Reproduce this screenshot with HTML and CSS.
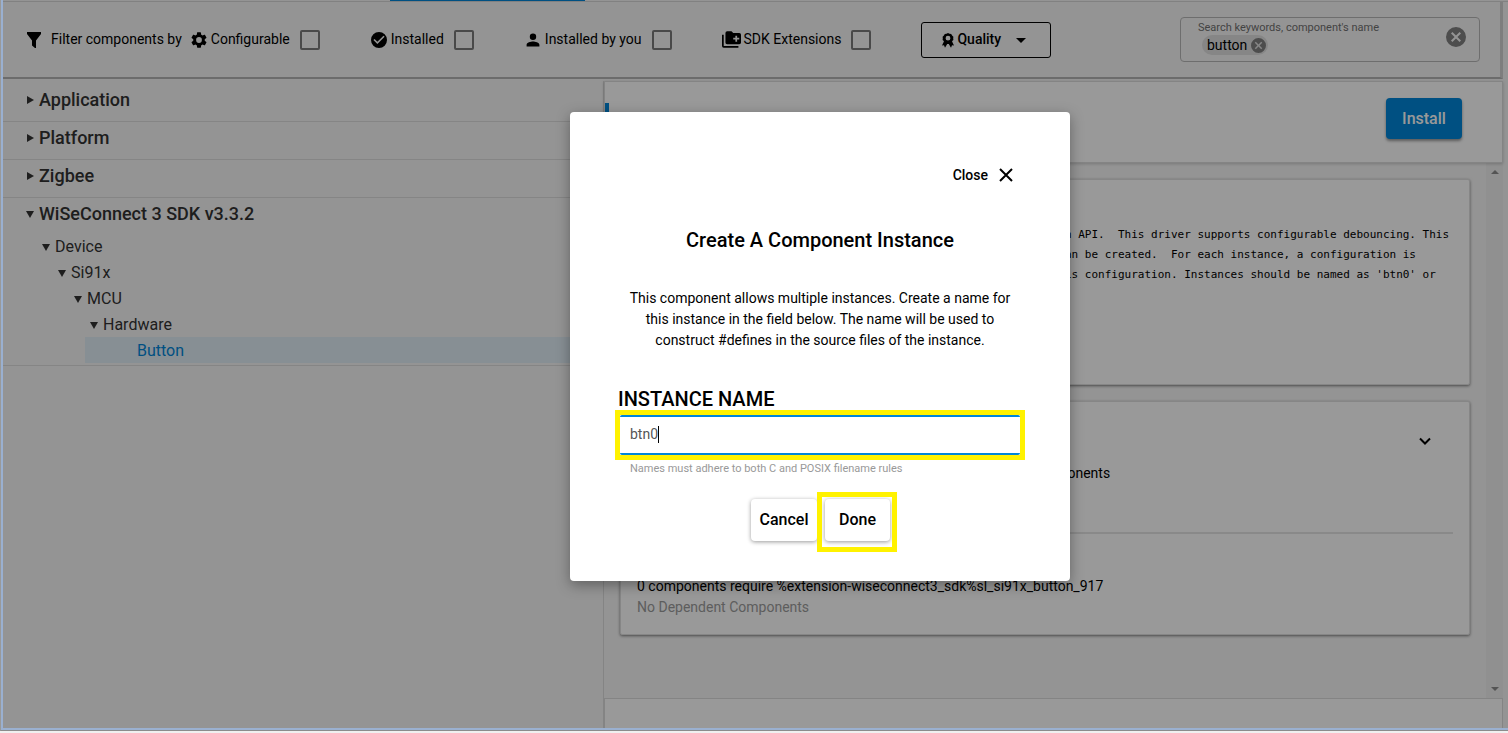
FILE: index.html
```html
<!DOCTYPE html>
<html lang="en">
<head>
<meta charset="utf-8">
<title>Software Components</title>
<link rel="stylesheet" href="styles.css">
</head>
<body>
<div class="window">
<div class="app">
  <div class="tab-strip"><span class="tab-active"></span></div>
  <header class="toolbar">
    <svg class="funnel" viewBox="0 0 14 16"><path d="M0 0h14v2L9 8.500V16L8 16 5 13.500V8.500L0 2z"/></svg>
    <span class="filter-title">Filter components by</span>
    <div class="filters">
      <label class="filter">
        <svg class="icon" viewBox="2 2 20 20"><path d="M19.140 12.940c.04-.3.06-.61.06-.94 0-.32-.02-.64-.07-.94l2.030-1.580a.49.49 0 0 0 .12-.61l-1.920-3.320a.488.488 0 0 0-.59-.22l-2.390.96c-.5-.38-1.030-.7-1.620-.94l-.36-2.540a.484.484 0 0 0-.48-.41h-3.840c-.24 0-.43.17-.47.41l-.36 2.540c-.59.24-1.130.57-1.620.94l-2.390-.96c-.22-.08-.47 0-.59.22L2.740 8.870c-.12.21-.08.47.12.61l2.030 1.580c-.05.3-.09.63-.09.94s.02.64.07.94l-2.030 1.580a.49.49 0 0 0-.12.61l1.920 3.320c.12.22.37.29.59.22l2.390-.96c.5.38 1.030.7 1.620.94l.36 2.540c.05.24.24.41.48.41h3.840c.24 0 .44-.17.47-.41l.36-2.540c.59-.24 1.130-.56 1.620-.94l2.390.96c.22.08.47 0 .59-.22l1.920-3.320c.12-.22.07-.47-.12-.61zM12 15.600A3.600 3.600 0 1 1 12 8.400a3.600 3.600 0 0 1 0 7.200z"/></svg>
        <span class="filter-name">Configurable</span><input type="checkbox" class="box">
      </label>
      <label class="filter">
        <svg class="icon" viewBox="2 2 20 20"><path d="M12 2a10 10 0 1 0 0 20 10 10 0 0 0 0-20zm-2 15-5-5 1.400-1.400L10 14.200l7.600-7.600L19 8z"/></svg>
        <span class="filter-name">Installed</span><input type="checkbox" class="box">
      </label>
      <label class="filter">
        <svg class="icon" viewBox="2 2 20 20"><path d="M12 12a4 4 0 1 0 0-8 4 4 0 0 0 0 8zm0 2c-2.700 0-8 1.300-8 4v2h16v-2c0-2.700-5.300-4-8-4z"/></svg>
        <span class="filter-name">Installed by you</span><input type="checkbox" class="box">
      </label>
      <label class="filter">
        <svg class="icon icon-wide" viewBox="1 2 22 20"><path d="M3 6H1v13a2 2 0 0 0 2 2h17v-2H3z"/><path d="M21 4h-7l-2-2H7a2 2 0 0 0-2 2v11c0 1.100.9 2 2 2h14a2 2 0 0 0 2-2V6a2 2 0 0 0-2-2zm0 7.500h-2.500V14h-2v-2.500H14v-2h2.500V7h2v2.500H21z"/></svg>
        <span class="filter-name">SDK Extensions</span><input type="checkbox" class="box">
      </label>
      <div class="quality">
        <select class="quality-select" aria-label="Quality"><option>Quality</option></select>
        <svg class="quality-medal" viewBox="0 0 12 15"><path fill-rule="evenodd" d="M6 0l1.500.8 1.700.1.900 1.600 1.300 1.200-.2 1.600.2 1.700L10.200 8l-.1.500L12 12.500l-2-.2L9 14.800 6.800 11H5.200L3 14.800l-1-2.500-2 .2 1.900-4L1.800 8 .6 7l.2-1.700-.2-1.600 1.300-1.200.9-1.600L4.500.8zM6 2.800a2.400 2.400 0 1 0 0 4.800 2.400 2.400 0 0 0 0-4.800z"/></svg>
        <svg class="quality-arrow" viewBox="0 0 10 5"><path d="M0 0h10L5 5z"/></svg>
      </div>
    </div>
    <div class="search">
      <div class="search-body">
        <label class="search-label" for="search">Search keywords, component's name</label>
        <div class="search-line">
          <span class="chip"><span class="chip-name">button</span>
            <button class="round-clear" aria-label="Remove button"><svg viewBox="2 2 20 20"><path d="M12 2a10 10 0 1 0 0 20 10 10 0 0 0 0-20zm5 13.600L15.600 17 12 13.400 8.400 17 7 15.600l3.600-3.600L7 8.400 8.400 7l3.600 3.600L15.600 7 17 8.400 13.400 12z"/></svg></button>
          </span>
          <input id="search" class="search-input" type="text">
        </div>
      </div>
      <button class="round-clear clear-all" aria-label="Clear search"><svg viewBox="2 2 20 20"><path d="M12 2a10 10 0 1 0 0 20 10 10 0 0 0 0-20zm5 13.600L15.600 17 12 13.400 8.400 17 7 15.600l3.600-3.600L7 8.400 8.400 7l3.600 3.600L15.600 7 17 8.400 13.400 12z"/></svg></button>
    </div>
  </header>

  <div class="columns">
    <nav class="tree">
      <div class="group"><button class="node top"><svg class="arrow" viewBox="0 0 8 8"><path d="M1 0l7 4-7 4z"/></svg>Application</button></div>
      <div class="group"><button class="node top"><svg class="arrow" viewBox="0 0 8 8"><path d="M1 0l7 4-7 4z"/></svg>Platform</button></div>
      <div class="group"><button class="node top"><svg class="arrow" viewBox="0 0 8 8"><path d="M1 0l7 4-7 4z"/></svg>Zigbee</button></div>
      <div class="group open">
        <button class="node top"><svg class="arrow" viewBox="0 0 8 8"><path d="M0 1h8L4 8z"/></svg>WiSeConnect 3 SDK v3.3.2</button>
        <div class="branch">
          <button class="node"><svg class="arrow" viewBox="0 0 8 8"><path d="M0 1h8L4 8z"/></svg>Device</button>
          <div class="branch">
            <button class="node"><svg class="arrow" viewBox="0 0 8 8"><path d="M0 1h8L4 8z"/></svg>Si91x</button>
            <div class="branch">
              <button class="node"><svg class="arrow" viewBox="0 0 8 8"><path d="M0 1h8L4 8z"/></svg>MCU</button>
              <div class="branch">
                <button class="node"><svg class="arrow" viewBox="0 0 8 8"><path d="M0 1h8L4 8z"/></svg>Hardware</button>
                <button class="node leaf">Button</button>
              </div>
            </div>
          </div>
        </div>
      </div>
    </nav>

    <main class="detail">
      <div class="detail-head">
        <span class="accent"></span>
        <button class="install">Install</button>
      </div>
      <div class="scroller">
        <div class="cards">
          <section class="card description">
            <pre class="mono">n API.  This driver supports configurable debouncing. This
an be created.  For each instance, a configuration is
is configuration. Instances should be named as 'btn0' or</pre>
          </section>
          <section class="card dependencies">
            <button class="expand" aria-label="Expand"><svg viewBox="0 0 24 24"><path d="M7 9.500l5 5 5-5" fill="none" stroke="#000" stroke-width="2"/></svg></button>
            <p class="requires">components</p>
            <hr class="rule">
            <p class="line">0 components require %extension-wiseconnect3_sdk%sl_si91x_button_917</p>
            <p class="line muted">No Dependent Components</p>
          </section>
        </div>
        <div class="scrollbar">
          <svg viewBox="0 0 8 4"><path d="M4 0l4 4H0z"/></svg>
          <svg viewBox="0 0 8 4"><path d="M0 0h8L4 4z"/></svg>
        </div>
      </div>
      <footer class="detail-foot"></footer>
    </main>
  </div>

  <div class="backdrop">
    <div class="dialog" role="dialog" aria-modal="true" aria-labelledby="dialog-title">
      <button class="close">Close <svg viewBox="0 0 14 14"><path d="M1 1l12 12M13 1L1 13" fill="none" stroke="#000" stroke-width="2"/></svg></button>
      <h2 id="dialog-title" class="dialog-title">Create A Component Instance</h2>
      <p class="dialog-text">This component allows multiple instances. Create a name for this instance in the field below. The name will be used to construct #defines in the source files of the instance.</p>
      <label class="field-label" for="instance">INSTANCE NAME</label>
      <div class="field">
        <input id="instance" class="field-input" type="text" value="btn0">
        <span class="caret"></span>
      </div>
      <p class="hint">Names must adhere to both C and POSIX filename rules</p>
      <div class="actions">
        <button class="action cancel">Cancel</button>
        <button class="action done">Done</button>
      </div>
    </div>
  </div>
</div>
</div>
</body>
</html>
```

FILE: styles.css
```css
* { box-sizing: border-box; }
body {
  margin: 0;
  background: #f0f0f0;
  font-family: Roboto, "Liberation Sans", sans-serif;
  font-size: 14px;
  color: #000;
}
button, input, select { font: inherit; color: inherit; }
button { border: 0; padding: 0; background: none; }
p, h2, pre { margin: 0; }
svg { display: block; flex: none; }

.window {
  min-height: calc(100vh - 2px);
  display: flex;
  border-left: 1px solid #999;
  border-bottom: 1px solid #8c8c8c;
}
.app {
  position: relative;
  flex: 1;
  min-width: 0;
  display: flex;
  flex-direction: column;
  border-left: 2px solid #9ab0d0;
  border-bottom: 2px solid #9ab0d0;
  background: #f7f7f7;
  padding-right: 5px;
}
.tab-strip {
  height: 2px;
  padding-left: 387px;
  border-bottom: 1px solid #d8d8d8;
  margin-right: -5px;
}
.tab-active { display: block; width: 195px; height: 1px; background: #0086d9; }

/* filter toolbar */
.toolbar {
  display: flex;
  align-items: center;
  height: 77px;
  padding: 0 20px 0 24px;
  border-bottom: 2px solid #b4b4b4;
  border-right: 3px solid #d2d2d2;
}
.funnel { width: 14px; height: 16px; }
.filter-title { margin: 0 8px 0 10px; padding-bottom: 2px; white-space: nowrap; }
.filters { display: flex; align-items: center; gap: 50px; }
.filter { display: flex; align-items: center; gap: 3px; white-space: nowrap; }
.filter-name { padding-bottom: 2px; }
.icon { width: 18px; height: 16px; }
.icon-wide { width: 19px; height: 18px; }
.box {
  appearance: none;
  width: 20px;
  height: 20px;
  margin: 0 0 0 7px;
  border: 2px solid #7a7a7a;
  border-radius: 2px;
}
.quality { position: relative; width: 130px; }
.quality-select {
  display: block;
  appearance: none;
  width: 100%;
  height: 36px;
  padding: 0 0 2px 35px;
  border: 1px solid #000;
  border-radius: 3px;
  background: none;
  font-weight: 500;
}
.quality-medal { position: absolute; left: 21px; top: 11px; width: 12px; height: 15px; }
.quality-arrow { position: absolute; right: 25px; top: 16px; width: 10px; height: 5px; }

.search {
  display: flex;
  align-items: center;
  width: 300px;
  height: 45px;
  margin-left: auto;
  padding: 0 13px 0 17px;
  border: 1px solid #b8b8b8;
  border-radius: 4px;
}
.search-body { flex: 1; min-width: 0; padding-bottom: 3px; }
.search-label { display: block; font-size: 11px; line-height: 14px; color: #707070; }
.search-line { display: flex; padding-left: 4px; }
.chip {
  display: flex;
  align-items: center;
  gap: 4px;
  height: 20px;
  padding: 0 2px 0 5px;
  border-radius: 10px;
  background: #e0e0e0;
}
.chip-name { padding-bottom: 1px; }
.search-input { flex: 1; min-width: 0; height: 20px; border: 0; background: none; outline: 0; }
.round-clear { width: 15px; height: 15px; fill: #808080; }
.clear-all { width: 20px; height: 20px; margin-bottom: 6px; }

/* component tree */
.columns { flex: 1; display: flex; }
.tree { width: 40%; flex: none; padding-top: 5px; }
.group { height: 38px; border-bottom: 1px solid #dedede; }
.open { height: auto; padding-bottom: 2px; }
.node {
  display: flex;
  align-items: center;
  gap: 5px;
  width: 100%;
  height: 26px;
  padding-left: 23px;
  font-size: 16px;
  color: #333;
}
.top { height: 32px; padding-bottom: 2px; font-size: 18px; font-weight: 500; }
.top + .branch { padding-top: 3px; }
.arrow { width: 8px; height: 8px; margin-top: 2px; fill: #333; }
.branch { padding-left: 16px; }
.leaf {
  width: calc(100% - 18px);
  margin-left: 18px;
  padding-left: 52px;
  background: #e1eef7;
  color: #0086d9;
}

/* component detail */
.detail {
  flex: 1;
  min-width: 0;
  display: flex;
  flex-direction: column;
  margin-top: 2px;
  border-left: 1px solid #dcdcdc;
}
.detail-head {
  position: relative;
  display: flex;
  justify-content: flex-end;
  height: 82px;
  padding: 16px 40px 0 0;
  border: 1px solid #dcdcdc;
  background: #fff;
  box-shadow: 0 1px 3px rgba(0, 0, 0, .2);
}
.accent { position: absolute; left: 0; top: 21px; width: 4px; height: 36px; background: #0086d9; }
.install {
  width: 76px;
  height: 41px;
  border-radius: 4px;
  background: #0086d9;
  box-shadow: 0 2px 3px rgba(0, 0, 0, .4);
  color: #fff;
  font-size: 16px;
  font-weight: 500;
}
.scroller { flex: 1; display: flex; }
.cards { flex: 1; min-width: 0; padding: 16px 16px 0; display: flex; flex-direction: column; gap: 16px; }
.card {
  border: 1px solid #e0e0e0;
  border-radius: 2px;
  background: #fff;
  box-shadow: 0 1px 3px rgba(0, 0, 0, .5);
  padding: 0 16px;
}
.description { padding-top: 45px; padding-bottom: 99px; }
.mono {
  padding-left: 428px;
  font-family: "DejaVu Sans Mono", monospace;
  font-size: 11px;
  line-height: 20px;
}
.dependencies { padding-top: 27px; padding-bottom: 16px; }
.expand { display: block; margin: 0 16px 0 auto; width: 24px; height: 24px; }
.requires { margin-top: 9px; padding-left: 395px; line-height: 22px; }
.rule { height: 2px; margin: 48px 0 42px; border: 0; background: #e4e4e4; }
.line { line-height: 21px; }
.muted { color: #9c9c9c; }
.scrollbar {
  display: flex;
  flex-direction: column;
  justify-content: space-between;
  align-items: center;
  width: 17px;
  padding: 7px 0;
  background: #f0f0f0;
}
.scrollbar svg { width: 8px; height: 4px; fill: #8c8c8c; }
.detail-foot { height: 30px; border: 1px solid #dcdcdc; border-bottom: 0; background: #fff; }

/* instance dialog */
.backdrop {
  position: absolute;
  inset: 0;
  display: flex;
  justify-content: center;
  align-items: flex-start;
  padding: 112px 0 0 129px;
  background: rgba(0, 0, 0, .4);
}
.dialog {
  width: 500px;
  padding: 51px 45px 40px;
  border-radius: 4px;
  background: #fff;
  box-shadow: 0 4px 14px rgba(0, 0, 0, .35);
}
.close {
  display: flex;
  align-items: center;
  gap: 11px;
  height: 24px;
  margin: 0 12px 0 auto;
  font-weight: 500;
}
.close svg { width: 14px; height: 14px; }
.dialog-title { margin-top: 39px; font-size: 20px; line-height: 28px; font-weight: 500; text-align: center; }
.dialog-text { margin: 34px 12px 0; line-height: 21px; text-align: center; }
.field-label { display: block; margin: 37px 3px 0; font-size: 20px; line-height: 22px; font-weight: 500; }
.field { position: relative; border: 5px solid #fff200; }
.field-input {
  display: block;
  width: 100%;
  height: 40px;
  padding: 0 10px 2px;
  border: solid #0086d9;
  border-width: 2px 0;
  border-radius: 2px;
  outline: 0;
  background: #fff;
  color: #555;
}
.caret { position: absolute; left: 38px; top: 11px; width: 1px; height: 17px; background: #000; }
.hint { margin: 2px 15px 0; font-size: 11px; line-height: 14px; color: #999; }
.actions { display: flex; justify-content: center; gap: 8px; margin-top: 23px; padding-left: 1px; }
.action {
  position: relative;
  width: 66px;
  height: 42px;
  padding-bottom: 2px;
  border-radius: 4px;
  background: #fff;
  box-shadow: 0 1px 4px rgba(0, 0, 0, .4);
  font-size: 16px;
  font-weight: 500;
}
.done { width: 65px; }
.done::after {
  content: "";
  position: absolute;
  inset: -7px -7px -11px -8px;
  border: 5px solid #fff200;
}
```
